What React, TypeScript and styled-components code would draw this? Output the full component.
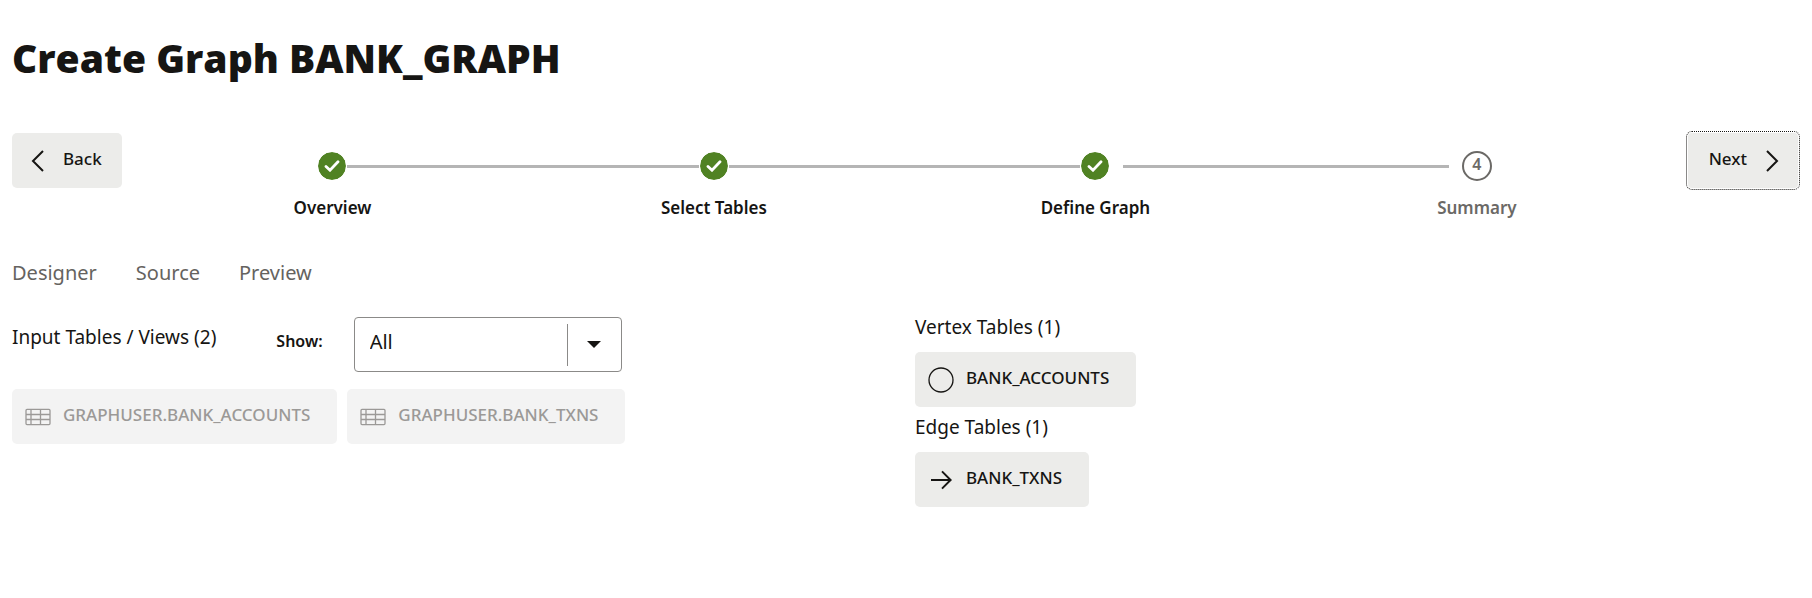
import React, { useState } from "react";
import styled, { createGlobalStyle, css } from "styled-components";

const GlobalStyle = createGlobalStyle`
  *, *::before, *::after { box-sizing: border-box; }
  body {
    margin: 0;
    background: #ffffff;
    color: #161513;
    font-family: "Noto Sans", "Open Sans", sans-serif;
    font-size: 17px;
    line-height: 24px;
  }
  button, select { font: inherit; color: inherit; }
`;

const Page = styled.main`
  padding: 31px 12px 24px;
`;

const Title = styled.h1`
  margin: 0 0 46px;
  font-family: "Open Sans", "Noto Sans", sans-serif;
  font-size: 39px;
  line-height: 54px;
  font-weight: 800;
`;

const WizardBar = styled.header`
  display: flex;
  align-items: flex-start;
`;

const NavButton = styled.button<{ $outlined?: boolean }>`
  display: flex;
  align-items: center;
  gap: 18px;
  height: ${(p) => (p.$outlined ? 59 : 55)}px;
  margin-top: ${(p) => (p.$outlined ? 0 : 2)}px;
  padding: 0 20px 0 19px;
  border: 0;
  border-radius: 5px;
  background: #ececea;
  font-weight: 500;
  cursor: pointer;
  flex: none;
  ${(p) =>
    p.$outlined &&
    css`
      border: 1px dotted #161513;
      padding: 0 20px 0 22px;
      border-radius: 6px;
      background-clip: padding-box;
      box-shadow: inset 0 0 0 1px #ffffff;
    `}
`;

const ButtonText = styled.span`
  padding-bottom: 4px;
`;

const Steps = styled.ol`
  display: flex;
  flex: 1;
  margin: 0 18px 0 20px;
  padding: 20px 0 0;
  list-style: none;
`;

const Step = styled.li`
  flex: 1;
  display: flex;
  flex-direction: column;
  align-items: center;
  gap: 15px;
`;

const Track = styled.div`
  display: grid;
  grid-template-columns: 1fr 30px 1fr;
  align-items: center;
  width: 100%;
`;

const Line = styled.span<{ $shown: boolean; $before?: number; $after?: number }>`
  height: 3px;
  margin-left: ${(p) => p.$before ?? 0}px;
  margin-right: ${(p) => p.$after ?? 0}px;
  background: ${(p) => (p.$shown ? "#b5b5b5" : "transparent")};
`;

const Marker = styled.span<{ $done: boolean }>`
  display: flex;
  align-items: center;
  justify-content: center;
  width: 30px;
  height: 30px;
  border: ${(p) => (p.$done ? "1px solid #ffffff" : "2px solid #6b6966")};
  border-radius: 50%;
  background: ${(p) => (p.$done ? "#508223" : "#ffffff")};
  background-clip: padding-box;
  color: #6b6966;
  font-size: 16px;
  line-height: 22px;
  font-weight: 600;
  padding-bottom: ${(p) => (p.$done ? 0 : 4)}px;
`;

const StepLabel = styled.span<{ $muted: boolean }>`
  font-weight: 600;
  color: ${(p) => (p.$muted ? "#6b6966" : "#161513")};
`;

const Tabs = styled.div`
  display: flex;
  gap: 39px;
  margin-top: 39px;
`;

const Tab = styled.button`
  padding: 0;
  border: 0;
  background: none;
  color: #656360;
  font-size: 20px;
  line-height: 28px;
  cursor: pointer;
`;

const Columns = styled.div`
  display: grid;
  grid-template-columns: 1fr 1fr;
  gap: 18px;
  margin-top: 30px;
`;

const Column = styled.section``;

const Heading = styled.h2`
  margin: 0;
  font-size: 19px;
  line-height: 28px;
  font-weight: 400;
`;

const FilterRow = styled.div`
  display: flex;
  align-items: flex-start;
  margin-bottom: 17px;
`;

const InputHeading = styled(Heading)`
  padding-top: 6px;
`;

const FilterLabel = styled.label`
  margin: 12px 31px 0 60px;
  font-size: 16px;
  font-weight: 600;
`;

const SelectBox = styled.span`
  display: grid;
  align-items: center;
  width: 268px;
  height: 55px;
  border: 1px solid #8b8a88;
  border-radius: 4px;
`;

const Select = styled.select`
  grid-area: 1 / 1;
  width: 100%;
  height: 100%;
  padding: 0 70px 6px 15px;
  border: 0;
  background: none;
  appearance: none;
  font-size: 20px;
`;

const SelectArrow = styled.span`
  grid-area: 1 / 1;
  justify-self: end;
  display: flex;
  align-items: center;
  justify-content: center;
  width: 54px;
  height: 42px;
  border-left: 1px solid #8b8a88;
  pointer-events: none;
`;

const Chips = styled.div`
  display: flex;
  flex-wrap: wrap;
  gap: 10px;
`;

const Chip = styled.button`
  display: flex;
  align-items: center;
  gap: 12px;
  height: 55px;
  padding: 0 27px 0 13px;
  border: 0;
  border-radius: 5px;
  background: #ececea;
  font-weight: 500;
  cursor: pointer;

  &:disabled {
    background: #f3f3f3;
    color: #9b9997;
    cursor: default;
  }
`;

const TableGroup = styled.div`
  & + & {
    margin-top: 10px;
  }
  ${Heading} {
    margin: -4px 0 11px;
  }
`;

const Chevron = ({ left }: { left?: boolean }) => (
  <svg width="14" height="24" viewBox="0 0 14 24" fill="none" stroke="currentColor" strokeWidth="2" aria-hidden="true">
    <path d={left ? "M12 2 L2 12 L12 22" : "M2 2 L12 12 L2 22"} />
  </svg>
);

const Check = () => (
  <svg width="16" height="12" viewBox="0 0 16 12" fill="none" stroke="#ffffff" strokeWidth="2.8" strokeLinecap="round" aria-hidden="true">
    <path d="M2 6.4 L6 10.2 L14 1.8" />
  </svg>
);

const TableIcon = () => (
  <svg width="26" height="18" viewBox="0 0 26 18" fill="none" stroke="currentColor" strokeWidth="1.3" aria-hidden="true">
    <rect x="1" y="1.4" width="24" height="15.2" rx="1" />
    <path d="M1 6.5 H25 M1 11.5 H25 M6 1.4 V16.6 M15.5 1.4 V16.6" />
  </svg>
);

const VertexIcon = () => (
  <svg width="26" height="26" viewBox="0 0 26 26" fill="none" stroke="currentColor" strokeWidth="1.3" aria-hidden="true">
    <circle cx="13" cy="13" r="12" />
  </svg>
);

const EdgeIcon = () => (
  <svg width="26" height="26" viewBox="0 0 26 26" fill="none" stroke="currentColor" strokeWidth="2" aria-hidden="true">
    <path d="M3 13 H23 M14 4.4 L22.6 13 L14 21.6" />
  </svg>
);

const steps = ["Overview", "Select Tables", "Define Graph", "Summary"];
const inputTables = ["GRAPHUSER.BANK_ACCOUNTS", "GRAPHUSER.BANK_TXNS"];
const currentStep = 2;

export default function App() {
  const [show, setShow] = useState("All");
  return (
    <>
      <GlobalStyle />
      <Page>
        <Title>Create Graph BANK_GRAPH</Title>
        <WizardBar>
          <NavButton type="button">
            <Chevron left />
            <ButtonText>Back</ButtonText>
          </NavButton>
          <Steps>
            {steps.map((label, i) => {
              const done = i <= currentStep;
              return (
                <Step key={label} aria-current={i === currentStep ? "step" : undefined}>
                  <Track>
                    <Line $shown={i > 0} $after={done ? 0 : 13} />
                    <Marker $done={done}>{done ? <Check /> : i + 1}</Marker>
                    <Line $shown={i < steps.length - 1} $before={i === currentStep ? 13 : 0} />
                  </Track>
                  <StepLabel $muted={!done}>{label}</StepLabel>
                </Step>
              );
            })}
          </Steps>
          <NavButton type="button" $outlined>
            <ButtonText>Next</ButtonText>
            <Chevron />
          </NavButton>
        </WizardBar>
        <Tabs role="tablist">
          {["Designer", "Source", "Preview"].map((t) => (
            <Tab key={t} type="button" role="tab">
              {t}
            </Tab>
          ))}
        </Tabs>
        <Columns>
          <Column>
            <FilterRow>
              <InputHeading>Input Tables / Views (2)</InputHeading>
              <FilterLabel htmlFor="show">Show:</FilterLabel>
              <SelectBox>
                <Select id="show" value={show} onChange={(e) => setShow(e.target.value)}>
                  <option>All</option>
                  <option>Tables</option>
                  <option>Views</option>
                </Select>
                <SelectArrow>
                  <svg width="14" height="7" viewBox="0 0 14 7" aria-hidden="true">
                    <path d="M0 0 H14 L7 7 Z" fill="#161513" />
                  </svg>
                </SelectArrow>
              </SelectBox>
            </FilterRow>
            <Chips>
              {inputTables.map((name) => (
                <Chip key={name} type="button" disabled>
                  <TableIcon />
                  <ButtonText>{name}</ButtonText>
                </Chip>
              ))}
            </Chips>
          </Column>
          <Column>
            <TableGroup>
              <Heading>Vertex Tables (1)</Heading>
              <Chip type="button">
                <VertexIcon />
                <ButtonText>BANK_ACCOUNTS</ButtonText>
              </Chip>
            </TableGroup>
            <TableGroup>
              <Heading>Edge Tables (1)</Heading>
              <Chip type="button">
                <EdgeIcon />
                <ButtonText>BANK_TXNS</ButtonText>
              </Chip>
            </TableGroup>
          </Column>
        </Columns>
      </Page>
    </>
  );
}
